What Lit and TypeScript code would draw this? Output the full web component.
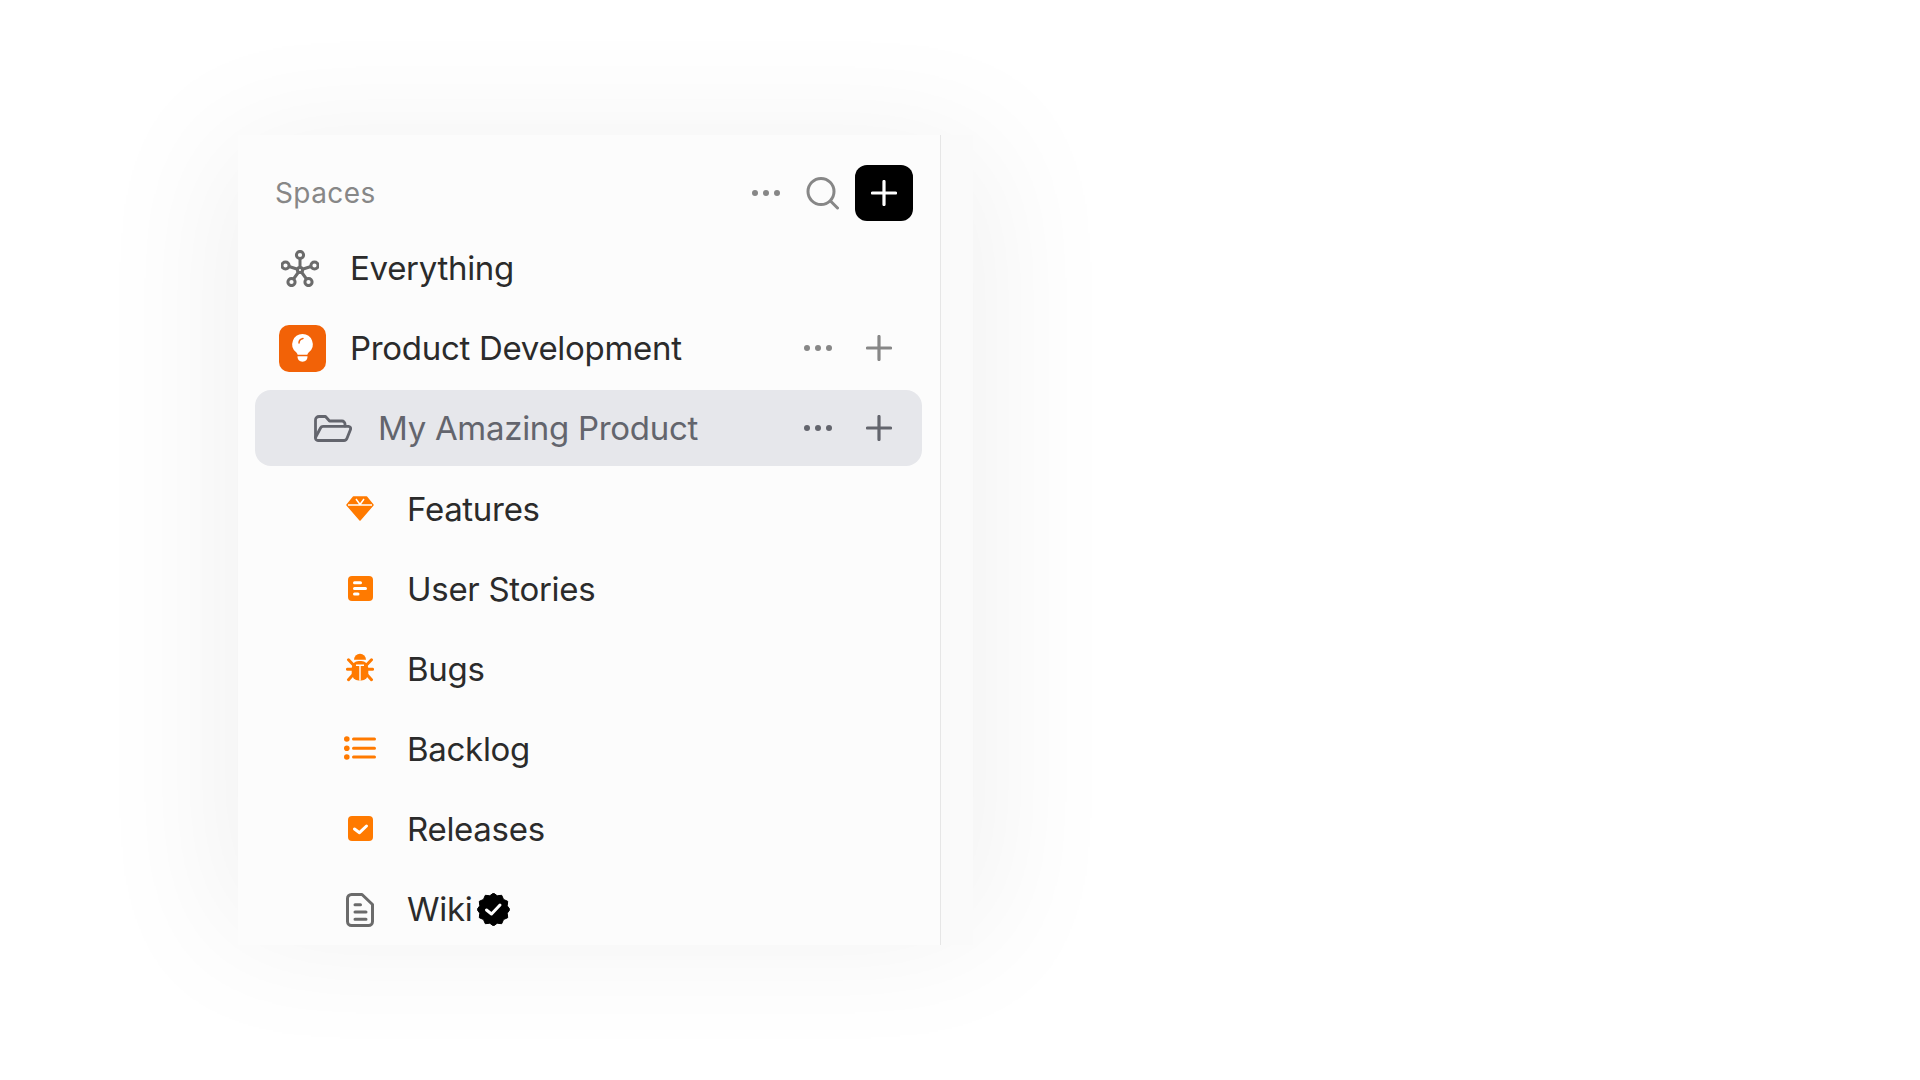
import { LitElement, html, css, svg } from 'lit';
import { customElement } from 'lit/decorators.js';

const ORANGE = '#ff7a00';
const GREY = '#6b6b6b';

// scalloped edge of the verified badge
const badgePoints = Array.from({ length: 24 }, (_, i) => {
  const a = (i * Math.PI) / 12;
  const r = i % 2 ? 14.2 : 16.4;
  return `${(16.5 + r * Math.sin(a)).toFixed(2)},${(16.5 - r * Math.cos(a)).toFixed(2)}`;
}).join(' ');

const dots = html`<svg width="28" height="6" viewBox="0 0 28 6" fill="currentColor">
  <circle cx="3" cy="3" r="3"></circle><circle cx="14" cy="3" r="3"></circle><circle cx="25" cy="3" r="3"></circle>
</svg>`;

const plus = html`<svg width="26" height="26" viewBox="0 0 26 26" stroke="currentColor" stroke-width="3.200" stroke-linecap="round">
  <path d="M13 1.500v23M1.500 13h23"></path>
</svg>`;

const everything = html`<svg class="shift" width="38" height="37" viewBox="0 0 38 37" fill="none" stroke="${GREY}" stroke-width="3">
  <path d="M19 20V9M19 20L8 16.500M19 20l11-3.500M19 20l-6.500 9M19 20l6.500 9"></path>
  <circle cx="19" cy="5" r="3.600" fill="#fcfcfc"></circle>
  <circle cx="4.500" cy="15.500" r="3.600" fill="#fcfcfc"></circle>
  <circle cx="33.500" cy="15.500" r="3.600" fill="#fcfcfc"></circle>
  <circle cx="10.500" cy="32" r="3.600" fill="#fcfcfc"></circle>
  <circle cx="27.500" cy="32" r="3.600" fill="#fcfcfc"></circle>
  <circle cx="19" cy="20" r="2.600" fill="#fcfcfc"></circle>
</svg>`;

const bulb = html`<svg width="47" height="47" viewBox="0 0 47 47">
  <rect width="47" height="47" rx="10" fill="#f26207"></rect>
  <path fill="#fff" d="M23.500 9a10.200 10.200 0 0 1 6.600 18c-1.100 1-1.500 1.800-1.700 2.800h-9.800c-.2-1-.6-1.800-1.700-2.800A10.200 10.200 0 0 1 23.500 9z"></path>
  <path fill="#fff" d="M18.500 31.300h10c0 3.300-1.800 5.400-5 5.400s-5-2.100-5-5.400z"></path>
  <path fill="none" stroke="#f26207" stroke-width="1.500" stroke-linecap="round" d="M20 18c0-2.300 1.700-4.200 4-4.600"></path>
</svg>`;

const folder = html`<svg width="38" height="27" viewBox="0 0 38 27" fill="none" stroke="currentColor" stroke-width="2.800" stroke-linejoin="round" stroke-linecap="round">
  <path d="M1.500 22V5a3.500 3.500 0 0 1 3.500-3.500h6.500l4 4.500h12.500a3 3 0 0 1 3 3v2"></path>
  <path d="M1.500 22.500L6.500 13a3 3 0 0 1 2.600-1.600H34.500a2.200 2.200 0 0 1 2 3L33 23.300a3.200 3.200 0 0 1-3 2.200H4a2.500 2.500 0 0 1-2.500-3z"></path>
</svg>`;

const diamond = html`<svg width="28" height="25" viewBox="0 0 28 25">
  <path fill="${ORANGE}" stroke="${ORANGE}" stroke-width="1.500" stroke-linejoin="round" d="M7.500 1H20.500L27 9 14 24 1 9z"></path>
  <path fill="none" stroke="#fff" stroke-width="1.500" d="M2 9h24M14 8.500L10 3M14 8.500L18 3"></path>
</svg>`;

const stories = html`<svg width="25" height="25" viewBox="0 0 25 25">
  <rect width="25" height="25" rx="4" fill="${ORANGE}"></rect>
  <path fill="none" stroke="#fff" stroke-width="3" stroke-linecap="round" d="M6.500 6.800h6M6.500 12.400h11M6.500 18h3.500"></path>
</svg>`;

const bug = html`<svg class="lift" width="28" height="29" viewBox="0 0 28 29">
  <path fill="${ORANGE}" d="M8 6.800a6 6 0 0 1 12 0z"></path>
  <rect x="5.700" y="8" width="16.600" height="19.500" rx="7" fill="${ORANGE}"></rect>
  <path fill="none" stroke="${ORANGE}" stroke-width="3" stroke-linecap="round" d="M2.500 6.800L7 11.500M25.500 6.800L21 11.500M1.400 16.300H6M26.600 16.300H22M2.500 26.700L7 21.800M25.500 26.700L21 21.800"></path>
  <path fill="none" stroke="#fff" stroke-width="1.400" d="M14 12.500v15M10 12.300h8"></path>
</svg>`;

const list = html`<svg width="32" height="24" viewBox="0 0 32 24">
  <g fill="${ORANGE}"><circle cx="2.800" cy="3" r="2.800"></circle><circle cx="2.800" cy="12.300" r="2.800"></circle><circle cx="2.800" cy="21" r="2.800"></circle></g>
  <path fill="none" stroke="${ORANGE}" stroke-width="3" stroke-linecap="round" d="M9.500 3h21M9.500 12.300h21M9.500 21h21"></path>
</svg>`;

const releases = html`<svg width="25" height="25" viewBox="0 0 25 25">
  <rect width="25" height="25" rx="4" fill="${ORANGE}"></rect>
  <path fill="none" stroke="#fff" stroke-width="3" stroke-linecap="round" stroke-linejoin="round" d="M6.500 13l5 3.700 7-6.700"></path>
</svg>`;

const doc = html`<svg class="nudge" width="28" height="34" viewBox="0 0 28 34" fill="none" stroke="${GREY}" stroke-width="3" stroke-linecap="round" stroke-linejoin="round">
  <path d="M5.500 1.500H16L26.500 11.500V28.500a4 4 0 0 1-4 4h-17a4 4 0 0 1-4-4v-23a4 4 0 0 1 4-4z"></path>
  <path d="M9 11.700h5.500M9 19h11M9 26.300h11"></path>
</svg>`;

const badge = html`<svg width="33" height="33" viewBox="0 0 33 33">
  ${svg`<polygon points="${badgePoints}" fill="#000" stroke="#000" stroke-width="1" stroke-linejoin="round"></polygon>`}
  <path fill="none" stroke="#fff" stroke-width="3" stroke-linecap="round" stroke-linejoin="round" d="M9.500 17l5 4 8.500-9"></path>
</svg>`;

const children = [
  { label: 'Features', icon: diamond },
  { label: 'User Stories', icon: stories },
  { label: 'Bugs', icon: bug },
  { label: 'Backlog', icon: list },
  { label: 'Releases', icon: releases },
  { label: 'Wiki', icon: doc, verified: true },
];

@customElement('app-root')
export class AppRoot extends LitElement {
  static styles = css`
    :host {
      display: block;
      width: 1920px;
      height: 1080px;
      background: #fff;
      font-family: Inter, 'Liberation Sans', sans-serif;
      overflow: hidden;
    }
    .stage {
      padding: 135px 0 0 238px;
    }
    .frame {
      position: relative;
      width: 735px;
      height: 810px;
    }
    /* soft glow, reaches further sideways than up and down */
    .frame::before {
      content: '';
      position: absolute;
      inset: 25px 0;
      box-shadow: 0 0 130px 18px rgba(0, 0, 0, 0.06);
    }
    .panel {
      position: relative;
      display: flex;
      width: 735px;
      height: 810px;
      overflow: hidden;
      background: #fafafa;
    }
    .sidebar {
      width: 703px;
      box-sizing: border-box;
      padding: 30px 18px 0 17px;
      background: #fcfcfc;
      border-right: 1px solid #e6e6e6;
      display: flex;
      flex-direction: column;
      gap: 9px;
    }
    .header {
      display: flex;
      align-items: center;
      height: 56px;
      padding-left: 20px;
      color: #878787;
    }
    .title {
      font-size: 28px;
      letter-spacing: 0.4px;
      flex: 1;
    }
    .header-dots {
      display: flex;
      margin-right: 26px;
    }
    .search {
      display: flex;
      margin-right: 16px;
    }
    .add {
      width: 58px;
      height: 56px;
      border-radius: 12px;
      background: #000;
      color: #fff;
      display: flex;
      align-items: center;
      justify-content: center;
      margin-right: 9px;
    }
    .rows {
      display: flex;
      flex-direction: column;
      gap: 4px;
    }
    .row {
      display: flex;
      align-items: center;
      height: 76px;
      box-sizing: border-box;
      font-size: 33px;
      letter-spacing: -0.3px;
      color: #2b2b2b;
    }
    .row.top {
      padding-left: 24px;
    }
    .row.top .icon {
      width: 47px;
      margin-right: 24px;
    }
    .row.mid {
      padding-left: 59px;
      background: #e6e7eb;
      border-radius: 16px;
      color: #63656d;
    }
    .row.mid .icon {
      width: 38px;
      margin-right: 26px;
    }
    .row.leaf {
      padding-left: 88px;
    }
    .row.leaf .icon {
      width: 34px;
      margin-right: 30px;
    }
    .row.leaf .label {
      padding-top: 2px;
    }
    .icon {
      display: flex;
      align-items: center;
      justify-content: center;
      flex: none;
    }
    .shift {
      margin-left: -5px;
    }
    .nudge {
      margin: 3px 0 0 -1px;
    }
    .lift {
      margin-top: -2px;
    }
    .label {
      flex: 1;
      display: flex;
      align-items: center;
      gap: 5px;
    }
    .badge {
      display: flex;
      margin-top: 1px;
    }
    .actions {
      display: flex;
      align-items: center;
      gap: 34px;
      padding-right: 30px;
      color: #878787;
    }
    .mid .actions {
      color: #63656d;
    }
    .actions > * {
      display: flex;
    }
  `;

  renderActions() {
    return html`<div class="actions"><span>${dots}</span><span>${plus}</span></div>`;
  }

  render() {
    return html`
      <div class="stage">
        <div class="frame">
          <div class="panel">
            <div class="sidebar">
              <div class="header">
                <span class="title">Spaces</span>
                <span class="header-dots">${dots}</span>
                <span class="search">
                  <svg width="33" height="33" viewBox="0 0 33 33" fill="none" stroke="currentColor" stroke-width="3" stroke-linecap="round">
                    <circle cx="15" cy="14.500" r="13"></circle>
                    <path d="M25 24.500L31.500 31"></path>
                  </svg>
                </span>
                <div class="add">${plus}</div>
              </div>
              <div class="rows">
                <div class="row top"><span class="icon">${everything}</span><span class="label">Everything</span></div>
                <div class="row top"><span class="icon">${bulb}</span><span class="label">Product Development</span>${this.renderActions()}</div>
                <div class="row mid"><span class="icon">${folder}</span><span class="label">My Amazing Product</span>${this.renderActions()}</div>
                ${children.map(
                  c => html`<div class="row leaf">
                    <span class="icon">${c.icon}</span>
                    <span class="label">${c.label}${c.verified ? html`<span class="badge">${badge}</span>` : ''}</span>
                  </div>`,
                )}
              </div>
            </div>
          </div>
        </div>
      </div>
    `;
  }
}
